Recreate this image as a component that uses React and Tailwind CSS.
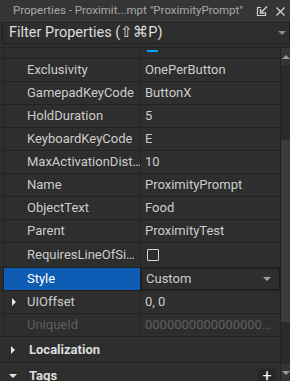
import React from 'react';

const rows = [
    { name: 'Exclusivity', value: 'OnePerButton' },
    { name: 'GamepadKeyCode', value: 'ButtonX' },
    { name: 'HoldDuration', value: '5' },
    { name: 'KeyboardKeyCode', value: 'E' },
    { name: 'MaxActivationDist…', value: '10' },
    { name: 'Name', value: 'ProximityPrompt' },
    { name: 'ObjectText', value: 'Food' },
    { name: 'Parent', value: 'ProximityTest' },
];

const Tri = ({ dir = 'down', className = '' }) => {
    const pts = {
        down: '0,0 8,0 4,4',
        up: '0,4 8,4 4,0',
        right: '0,0 4,4 0,8',
    }[dir];
    const size = dir === 'right' ? { w: 4, h: 8 } : { w: 8, h: 4 };
    return (
        <svg width={size.w} height={size.h} viewBox={`0 0 ${size.w} ${size.h}`} className={`shrink-0 ${className}`}>
            <polygon points={pts} fill="currentColor" />
        </svg>
    );
};

const Row = ({ name, children, nameClass = 'text-[#cccccc]', selected = false, arrow = false, valueClass = '', h = 'h-[23px]' }) => (
    <div className={`flex ${h} border-b border-[#222222]`}>
        <div className={`relative ml-[3px] w-[138px] flex items-center border-l border-r border-[#222222] pl-[23px] ${selected ? 'bg-[#0e5cb3] text-white' : nameClass}`}>
            {arrow && <Tri dir="right" className="absolute left-[8px] top-[7px] text-[#e6e6e6]" />}
            <span className="whitespace-nowrap overflow-hidden">{name}</span>
        </div>
        <div className={`flex-1 flex items-center min-w-0 ${valueClass}`}>{children}</div>
    </div>
);

const Value = ({ children, dim = false }) => (
    <span className={`pl-[4px] pr-[6px] truncate ${dim ? 'text-[#5f5f5f]' : 'text-[#cccccc]'}`}>{children}</span>
);

const App = () => {
    return (
        <div className="w-[290px] h-[381px] bg-[#2e2e2e] flex flex-col overflow-hidden text-[13px] font-['Roboto',sans-serif]">
            {/* title bar */}
            <div className="h-[22px] flex items-center bg-[#353535] text-[#a9a9a9]">
                <span className="pl-[13px] whitespace-nowrap flex-1 min-w-0 overflow-hidden text-[11.5px]">Properties - Proximit...mpt "ProximityPrompt"</span>
                <svg width="12" height="11" viewBox="0 0 12 11" className="shrink-0 mr-[8px] text-[#d0d0d0]">
                    <path d="M5 1.5H1.5V9.5H9.5V6" fill="none" stroke="currentColor" strokeWidth="1.2" />
                    <path d="M11 0.5L5.5 6" stroke="currentColor" strokeWidth="1.4" />
                    <path d="M4.5 3V7H8.5" fill="none" stroke="currentColor" strokeWidth="1.4" />
                </svg>
                <svg width="9" height="9" viewBox="0 0 9 9" className="shrink-0 mr-[5px] text-[#d0d0d0]">
                    <path d="M0.5 0.5L8.5 8.5M8.5 0.5L0.5 8.5" stroke="currentColor" strokeWidth="1.3" />
                </svg>
            </div>

            {/* filter */}
            <div className="h-[22px] ml-[2px] flex items-center border border-[#1f1f1f] bg-[#2e2e2e]">
                <span className="pl-[6px] flex-1 text-[14.5px] text-[#dddddd] whitespace-nowrap">Filter Properties (⇧⌘P)</span>
                <Tri className="mr-[3px] text-[#8c8c8c]" />
            </div>

            {/* list */}
            <div className="mt-[3px] flex-1 flex min-h-0 border-t border-[#222222]">
                <div className="flex-1 overflow-hidden">
                    {/* tail of the row scrolled out of view (Enabled) */}
                    <div className="flex h-[11px] border-b border-[#222222]">
                        <div className="ml-[3px] w-[138px] border-l border-r border-[#222222]" />
                        <div className="flex-1 pt-[2px]">
                            <div className="ml-[6px] w-[11px] h-[2px] bg-[#00a2ff]" />
                        </div>
                    </div>
                    {rows.map((r) => (
                        <Row key={r.name} name={r.name}>
                            <Value>{r.value}</Value>
                        </Row>
                    ))}
                    <Row name="RequiresLineOfSi…" h="h-[25px]">
                        <span className="ml-[6px] w-[12px] h-[12px] rounded-[1px] border border-[#d6d6d6]" />
                    </Row>
                    <Row name="Style" selected valueClass="border border-[#1b1b1b] pr-[8px]">
                        <span className="flex-1 pl-[4px] text-[#cccccc]">Custom</span>
                        <Tri className="text-[#a0a0a0]" />
                    </Row>
                    <Row name="UIOffset" arrow>
                        <Value>0, 0</Value>
                    </Row>
                    <Row name="UniqueId" nameClass="text-[#5f5f5f]">
                        <Value dim>00000000000000000000000000000000</Value>
                    </Row>
                    <div className="relative h-[26px] flex items-center border-b border-[#222222] bg-[#2e2e2e]">
                        <Tri dir="right" className="absolute left-[11px] text-[#e6e6e6]" />
                        <span className="pl-[29px] font-bold text-[#dddddd]">Localization</span>
                    </div>
                    <div className="relative h-[26px] flex items-center bg-[#2e2e2e]">
                        <Tri className="absolute left-[9px] text-[#e6e6e6]" />
                        <span className="pl-[29px] font-bold text-[#dddddd] flex-1">Tags</span>
                        <span className="mr-[4px] w-[18px] h-[14px] bg-[#262626] flex items-center justify-center text-white text-[16px] leading-none">+</span>
                    </div>
                </div>

                {/* scrollbar */}
                <div className="w-[10px] flex flex-col border-l border-[#222222] bg-[#2a2a2a]">
                    <div className="h-[17px] flex items-center justify-center bg-[#353535]">
                        <Tri dir="up" className="text-[#9a9a9a]" />
                    </div>
                    <div className="h-[75px]" />
                    <div className="h-[182px] bg-[#3c3c3c]" />
                    <div className="flex-1" />
                    <div className="h-[17px] flex items-center justify-center bg-[#353535]">
                        <Tri className="text-[#9a9a9a]" />
                    </div>
                </div>
            </div>
        </div>
    );
};

export default App;
